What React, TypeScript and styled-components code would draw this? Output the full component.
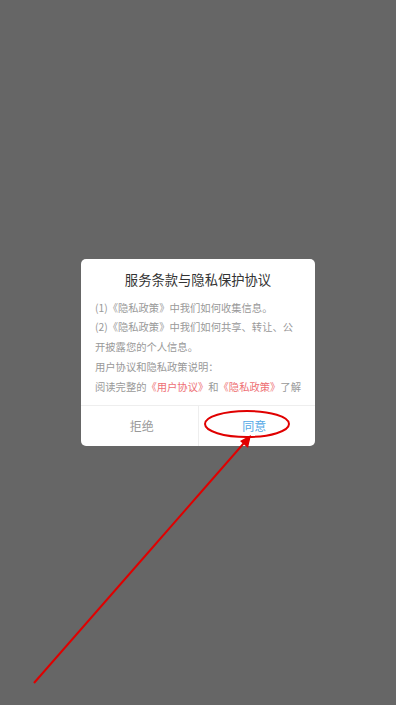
import React from 'react';
import styled, { createGlobalStyle } from 'styled-components';

const GlobalStyle = createGlobalStyle`
  html, body {
    margin: 0;
    padding: 0;
    background: #666666;
  }
  * {
    box-sizing: border-box;
  }
`;

const Screen = styled.div`
  position: relative;
  width: 100vw;
  height: 100vh;
  background: #666666;
  display: flex;
  align-items: center;
  justify-content: center;
  font-family: 'Noto Sans CJK SC', 'Noto Sans', sans-serif;
`;

const Dialog = styled.div`
  width: 234px;
  height: 187px;
  margin-top: -1px;
  background: #ffffff;
  border-radius: 5px;
  overflow: hidden;
  display: flex;
  flex-direction: column;
`;

const Title = styled.div`
  padding-top: 11px;
  height: 39px;
  line-height: 20px;
  text-align: center;
  font-size: 13.3px;
  color: #333333;
`;

const Body = styled.div`
  flex: 1;
  padding: 0 10px 0 14px;
  font-size: 10.3px;
  line-height: 19.8px;
  color: #999999;
  white-space: nowrap;
`;

const Line = styled.div``;

const Link = styled.span`
  color: #ee6f74;
`;

const Actions = styled.div`
  display: flex;
  height: 41px;
  border-top: 1px solid #eeeeee;
`;

const Action = styled.div<{ $primary?: boolean }>`
  flex: 1;
  display: flex;
  align-items: center;
  justify-content: center;
  padding-right: ${(p) => (p.$primary ? '5px' : '0')};
  padding-left: ${(p) => (p.$primary ? '0' : '5px')};
  font-size: 12px;
  color: ${(p) => (p.$primary ? '#52a8e6' : '#999999')};
  & + & {
    border-left: 1px solid #eeeeee;
  }
`;

const Annotation = styled.svg`
  position: absolute;
  left: 0;
  top: 0;
  width: 396px;
  height: 705px;
  pointer-events: none;
`;

const App = () => {
  return (
    <Screen>
      <GlobalStyle />
      <Dialog>
        <Title>服务条款与隐私保护协议</Title>
        <Body>
          <Line>(1)《隐私政策》中我们如何收集信息。</Line>
          <Line>(2)《隐私政策》中我们如何共享、转让、公</Line>
          <Line>开披露您的个人信息。</Line>
          <Line>用户协议和隐私政策说明：</Line>
          <Line>
            阅读完整的<Link>《用户协议》</Link>和<Link>《隐私政策》</Link>了解
          </Line>
        </Body>
        <Actions>
          <Action>拒绝</Action>
          <Action $primary>同意</Action>
        </Actions>
      </Dialog>
      <Annotation viewBox="0 0 396 705">
        <ellipse cx="247" cy="424" rx="42" ry="13" fill="none" stroke="#e00000" strokeWidth="2" />
        <line x1="34" y1="683" x2="244" y2="443" stroke="#e00000" strokeWidth="2" />
        <polygon points="251,435 240,441 248,448" fill="#e00000" />
      </Annotation>
    </Screen>
  );
};

export default App;
